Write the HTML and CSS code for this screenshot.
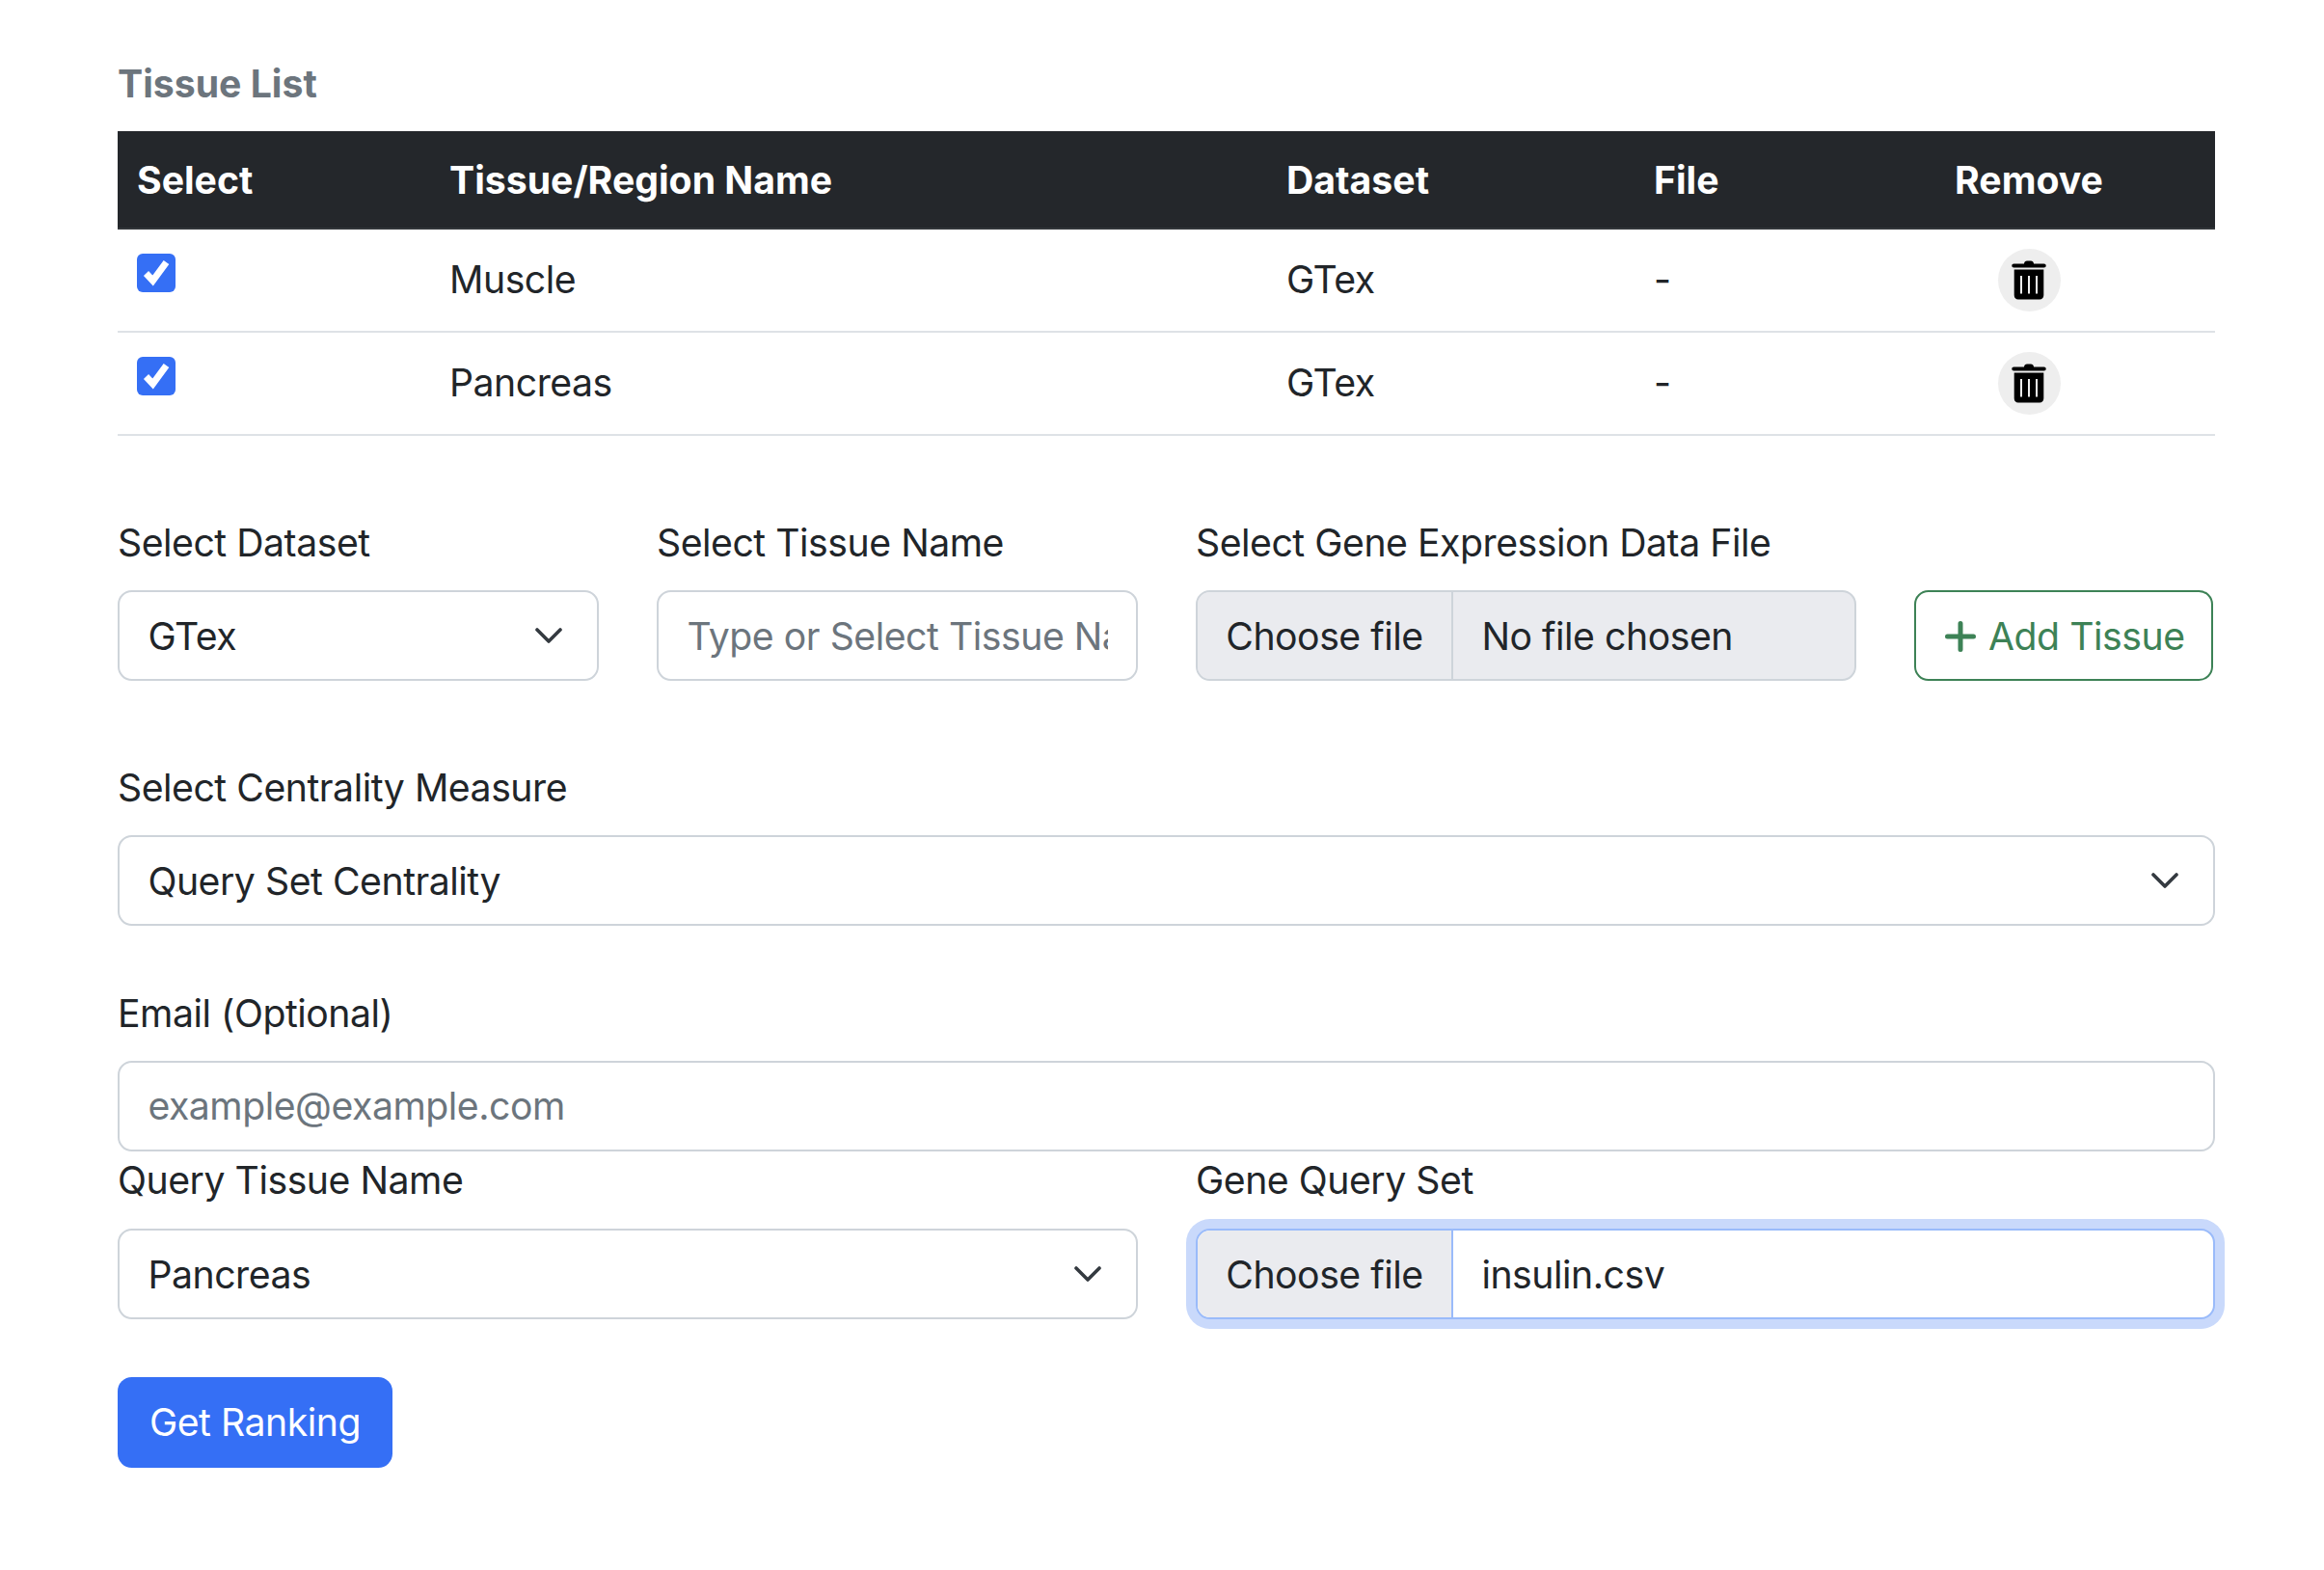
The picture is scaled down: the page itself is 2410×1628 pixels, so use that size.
FILE: index.html
```html
<!DOCTYPE html>
<html lang="en">
<head>
  <meta charset="UTF-8" />
  <meta name="viewport" content="width=device-width, initial-scale=1" />
  <title>Tissue List</title>
  <link rel="stylesheet" href="styles.css">
</head>
<body>

  <h2 class="list-title">Tissue List</h2>

  <table class="tissue-table">
    <colgroup>
      <col class="col-select">
      <col class="col-name">
      <col class="col-dataset">
      <col class="col-file">
      <col class="col-remove">
    </colgroup>
    <thead>
      <tr>
        <th>Select</th>
        <th>Tissue/Region Name</th>
        <th>Dataset</th>
        <th>File</th>
        <th class="cell-remove">Remove</th>
      </tr>
    </thead>
    <tbody>
      <tr>
        <td class="cell-check"><input type="checkbox" class="check" checked aria-label="Select Muscle"></td>
        <td>Muscle</td>
        <td>GTex</td>
        <td>-</td>
        <td class="cell-remove">
          <button type="button" class="remove-btn" aria-label="Remove Muscle">
            <svg class="trash" viewBox="0 0 36 41" aria-hidden="true">
              <path d="M13 3.5 C13 1.5 14.5 0.5 16 0.5 H20 C21.5 0.5 23 1.5 23 3.5 H33.5 C35 3.5 35.7 4.4 35.7 5.5 C35.7 6.6 35 7.5 33.5 7.5 H2.5 C1 7.5 0.3 6.6 0.3 5.5 C0.3 4.4 1 3.5 2.5 3.5 Z"/>
              <path fill-rule="evenodd" d="M2.7 9.5 H33.3 V36 C33.3 38.8 31.6 40.5 29 40.5 H7 C4.4 40.5 2.7 38.8 2.7 36 Z M9 16 V34.5 H11 V16 Z M17 16 V34.5 H19 V16 Z M25 16 V34.5 H27 V16 Z"/>
            </svg>
          </button>
        </td>
      </tr>
      <tr>
        <td class="cell-check"><input type="checkbox" class="check" checked aria-label="Select Pancreas"></td>
        <td>Pancreas</td>
        <td>GTex</td>
        <td>-</td>
        <td class="cell-remove">
          <button type="button" class="remove-btn" aria-label="Remove Pancreas">
            <svg class="trash" viewBox="0 0 36 41" aria-hidden="true">
              <path d="M13 3.5 C13 1.5 14.5 0.5 16 0.5 H20 C21.5 0.5 23 1.5 23 3.5 H33.5 C35 3.5 35.7 4.4 35.7 5.5 C35.7 6.6 35 7.5 33.5 7.5 H2.5 C1 7.5 0.3 6.6 0.3 5.5 C0.3 4.4 1 3.5 2.5 3.5 Z"/>
              <path fill-rule="evenodd" d="M2.7 9.5 H33.3 V36 C33.3 38.8 31.6 40.5 29 40.5 H7 C4.4 40.5 2.7 38.8 2.7 36 Z M9 16 V34.5 H11 V16 Z M17 16 V34.5 H19 V16 Z M25 16 V34.5 H27 V16 Z"/>
            </svg>
          </button>
        </td>
      </tr>
    </tbody>
  </table>

  <form class="rank-form">
    <div class="row row-tissue">
      <div class="field">
        <label class="field-label" for="dataset">Select Dataset</label>
        <select id="dataset" class="control select-control">
          <option>GTex</option>
        </select>
      </div>
      <div class="field">
        <label class="field-label" for="tissue-name">Select Tissue Name</label>
        <input id="tissue-name" class="control" type="text" placeholder="Type or Select Tissue Name">
      </div>
      <div class="field">
        <span class="field-label">Select Gene Expression Data File</span>
        <div class="file-control file-empty">
          <button type="button" class="file-btn">Choose file</button>
          <span class="file-name">No file chosen</span>
        </div>
      </div>
      <div class="field field-action">
        <button type="button" class="add-btn">
          <svg class="plus" viewBox="0 0 32 32" aria-hidden="true">
            <path d="M16 2.5 V29.5 M2.5 16 H29.5"/>
          </svg>
          <span>Add Tissue</span>
        </button>
      </div>
    </div>

    <div class="field field-centrality">
      <label class="field-label" for="centrality">Select Centrality Measure</label>
      <select id="centrality" class="control select-control">
        <option>Query Set Centrality</option>
      </select>
    </div>

    <div class="field field-email">
      <label class="field-label" for="email">Email (Optional)</label>
      <input id="email" class="control" type="email" placeholder="example@example.com">
    </div>

    <div class="row row-query">
      <div class="field">
        <label class="field-label" for="query-tissue">Query Tissue Name</label>
        <select id="query-tissue" class="control select-control">
          <option>Pancreas</option>
        </select>
      </div>
      <div class="field">
        <span class="field-label">Gene Query Set</span>
        <div class="file-control file-focus">
          <button type="button" class="file-btn">Choose file</button>
          <span class="file-name">insulin.csv</span>
        </div>
      </div>
    </div>

    <button type="button" class="rank-btn">Get Ranking</button>
  </form>

</body>
</html>
```

FILE: styles.css
```css
* {
  box-sizing: border-box;
}
body {
  margin: 0;
  padding: 58px 113px 88px 122px;
  background: #fff;
  color: #212529;
  font-family: Inter, "Liberation Sans", sans-serif;
  font-size: 39.2px;
  line-height: 58.8px;
  letter-spacing: -0.47px;
}

.list-title {
  margin: 0 0 19px;
  color: #6c757d;
  font-size: 39.2px;
  font-weight: 700;
  line-height: 58.8px;
  letter-spacing: 0;
}

/* table */
.tissue-table {
  width: 100%;
  table-layout: fixed;
  border-collapse: collapse;
}
.col-select { width: 324px; }
.col-name { width: 868px; }
.col-dataset { width: 381px; }
.col-file { width: 312px; }
.col-remove { width: 290px; }
.tissue-table th {
  height: 101px;
  padding: 22px 20px 18px;
  background: #24272b;
  color: #fff;
  font-weight: 700;
  letter-spacing: 0;
  text-align: left;
  border-bottom: 2px solid #32363a;
}
.tissue-table td {
  height: 107px;
  padding: 20px;
  border-bottom: 2px solid #dee2e6;
  vertical-align: middle;
}
.tissue-table td.cell-check {
  vertical-align: top;
}
.tissue-table .cell-remove {
  padding-right: 116px;
  text-align: center;
}
.check {
  display: block;
  width: 40px;
  height: 40px;
  margin: 5px 0 0;
  border-radius: 6px;
  background-color: #356ff5;
  background-image: url("data:image/svg+xml,%3csvg xmlns='http://www.w3.org/2000/svg' viewBox='0 0 40 40'%3e%3cpath fill='none' stroke='%23fff' stroke-width='7' d='M9.5 20.5 16.5 28 30.5 9'/%3e%3c/svg%3e");
  background-size: 100% 100%;
  appearance: none;
}
.remove-btn {
  display: inline-flex;
  align-items: center;
  justify-content: center;
  width: 65px;
  height: 65px;
  padding: 0;
  border: none;
  border-radius: 50%;
  background: #eee;
  vertical-align: top;
}
.trash {
  width: 36px;
  height: 41px;
  fill: #000;
}

/* form */
.rank-form {
  margin-top: 82px;
}
.row {
  display: grid;
  column-gap: 60px;
}
.row-tissue {
  grid-template-columns: 499px 499px 685px 1fr;
}
.row-query {
  grid-template-columns: 1058px 1fr;
}
.field-label {
  display: block;
  margin-bottom: 19.6px;
}
.field-action {
  display: flex;
  align-items: flex-end;
}
.field-centrality {
  margin-top: 81.5px;
}
.field-email {
  margin-top: 61.5px;
  margin-bottom: 1.5px;
}

.control {
  display: block;
  width: 100%;
  height: 94px;
  padding: 0 29.4px;
  border: 2px solid #ced4da;
  border-radius: 14.7px;
  background-color: #fff;
  color: #212529;
  font: inherit;
  letter-spacing: inherit;
  appearance: none;
}
.control::placeholder {
  color: #6c757d;
  opacity: 1;
}
.select-control {
  padding-top: 3px;
  padding-right: 88px;
  background-image: url("data:image/svg+xml,%3csvg xmlns='http://www.w3.org/2000/svg' viewBox='0 0 28 16'%3e%3cpath fill='none' stroke='%23343a40' stroke-linecap='round' stroke-linejoin='round' stroke-width='3.6' d='m2 2 12 12L26 2'/%3e%3c/svg%3e");
  background-repeat: no-repeat;
  background-position: right 36px center;
  background-size: 28px 16px;
}

.file-control {
  display: flex;
  height: 94px;
  border: 2px solid #ced4da;
  border-radius: 14.7px;
  overflow: hidden;
  background: #fff;
}
.file-empty {
  background: #eaebef;
}
.file-focus {
  border-color: #9abbfa;
  box-shadow: 0 0 0 10px #c9d9fb;
  overflow: visible;
}
.file-btn {
  width: 265px;
  padding: 3px 0 0;
  border: none;
  border-right: 2px solid #ced4da;
  background: #eaebef;
  color: #212529;
  font: inherit;
  letter-spacing: inherit;
}
.file-focus .file-btn {
  border-right-color: #9abbfa;
  border-radius: 12.7px 0 0 12.7px;
}
.file-name {
  padding-left: 29.4px;
  line-height: 91px;
}

.add-btn {
  display: flex;
  align-items: center;
  gap: 13px;
  width: 310px;
  height: 94px;
  padding: 2px 0 0 30px;
  border: 2px solid #3d8256;
  border-radius: 14.7px;
  background: #fff;
  color: #3d8256;
  font: inherit;
  letter-spacing: inherit;
  white-space: nowrap;
}
.plus {
  flex: none;
  width: 32px;
  height: 32px;
  fill: none;
  stroke: #3d8256;
  stroke-width: 5;
  stroke-linecap: round;
}

.rank-btn {
  display: block;
  width: 285px;
  height: 94px;
  margin-top: 60px;
  padding: 2px 0 0;
  border: none;
  border-radius: 14.7px;
  background: #356ff5;
  color: #fff;
  font: inherit;
  letter-spacing: inherit;
}
```
